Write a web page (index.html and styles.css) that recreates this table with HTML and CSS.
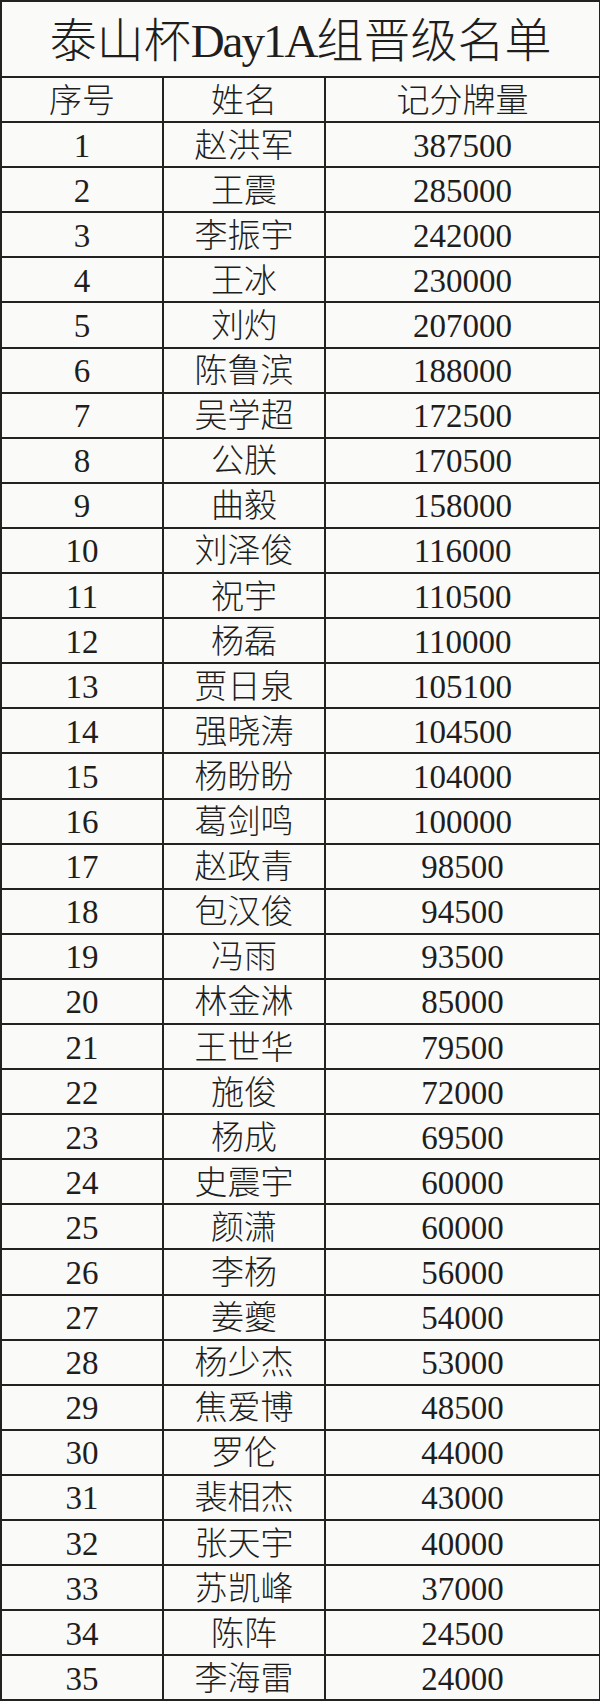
FILE: index.html
```html
<!DOCTYPE html>
<html lang="zh-CN">
<head>
<meta charset="utf-8">
<title>泰山杯Day1A组晋级名单</title>
<link rel="stylesheet" href="styles.css">
</head>
<body>
<table class="sheet">
  <colgroup>
    <col class="c-no">
    <col class="c-name">
    <col class="c-score">
  </colgroup>
  <thead>
    <tr class="title-row"><th colspan="3">泰山杯<span class="lat">Day1A</span>组晋级名单</th></tr>
    <tr class="head-row"><th>序号</th><th>姓名</th><th>记分牌量</th></tr>
  </thead>
  <tbody>
    <tr><td class="num">1</td><td>赵洪军</td><td class="num">387500</td></tr>
    <tr><td class="num">2</td><td>王震</td><td class="num">285000</td></tr>
    <tr><td class="num">3</td><td>李振宇</td><td class="num">242000</td></tr>
    <tr><td class="num">4</td><td>王冰</td><td class="num">230000</td></tr>
    <tr><td class="num">5</td><td>刘灼</td><td class="num">207000</td></tr>
    <tr><td class="num">6</td><td>陈鲁滨</td><td class="num">188000</td></tr>
    <tr><td class="num">7</td><td>吴学超</td><td class="num">172500</td></tr>
    <tr><td class="num">8</td><td>公朕</td><td class="num">170500</td></tr>
    <tr><td class="num">9</td><td>曲毅</td><td class="num">158000</td></tr>
    <tr><td class="num">10</td><td>刘泽俊</td><td class="num">116000</td></tr>
    <tr><td class="num">11</td><td>祝宇</td><td class="num">110500</td></tr>
    <tr><td class="num">12</td><td>杨磊</td><td class="num">110000</td></tr>
    <tr><td class="num">13</td><td>贾日泉</td><td class="num">105100</td></tr>
    <tr><td class="num">14</td><td>强晓涛</td><td class="num">104500</td></tr>
    <tr><td class="num">15</td><td>杨盼盼</td><td class="num">104000</td></tr>
    <tr><td class="num">16</td><td>葛剑鸣</td><td class="num">100000</td></tr>
    <tr><td class="num">17</td><td>赵政青</td><td class="num">98500</td></tr>
    <tr><td class="num">18</td><td>包汉俊</td><td class="num">94500</td></tr>
    <tr><td class="num">19</td><td>冯雨</td><td class="num">93500</td></tr>
    <tr><td class="num">20</td><td>林金淋</td><td class="num">85000</td></tr>
    <tr><td class="num">21</td><td>王世华</td><td class="num">79500</td></tr>
    <tr><td class="num">22</td><td>施俊</td><td class="num">72000</td></tr>
    <tr><td class="num">23</td><td>杨成</td><td class="num">69500</td></tr>
    <tr><td class="num">24</td><td>史震宇</td><td class="num">60000</td></tr>
    <tr><td class="num">25</td><td>颜潇</td><td class="num">60000</td></tr>
    <tr><td class="num">26</td><td>李杨</td><td class="num">56000</td></tr>
    <tr><td class="num">27</td><td>姜夔</td><td class="num">54000</td></tr>
    <tr><td class="num">28</td><td>杨少杰</td><td class="num">53000</td></tr>
    <tr><td class="num">29</td><td>焦爱博</td><td class="num">48500</td></tr>
    <tr><td class="num">30</td><td>罗伦</td><td class="num">44000</td></tr>
    <tr><td class="num">31</td><td>裴相杰</td><td class="num">43000</td></tr>
    <tr><td class="num">32</td><td>张天宇</td><td class="num">40000</td></tr>
    <tr><td class="num">33</td><td>苏凯峰</td><td class="num">37000</td></tr>
    <tr><td class="num">34</td><td>陈阵</td><td class="num">24500</td></tr>
    <tr><td class="num">35</td><td>李海雷</td><td class="num">24000</td></tr>
  </tbody>
</table>
</body>
</html>
```

FILE: styles.css
```css
html, body {
  margin: 0;
  padding: 0;
  background: #fafaf8;
}

.sheet {
  width: 599px;
  table-layout: fixed;
  border-collapse: collapse;
  color: #1e1e1e;
  font-family: "Liberation Serif", "Noto Sans CJK SC", serif;
  font-weight: 300;
}

.c-no { width: 162px; }
.c-name { width: 162px; }
.c-score { width: 275px; }

.sheet tr {
  height: 45.1px;
}

.sheet .title-row {
  height: 76px;
}

.sheet th,
.sheet td {
  border: 2px solid #222;
  padding: 2px 0 0;
  text-align: center;
  vertical-align: middle;
  font-weight: 300;
  font-size: 33px;
  line-height: 36px;
  white-space: nowrap;
  overflow: hidden;
}

.title-row th {
  font-size: 47px;
  line-height: 50px;
  padding-top: 4px;
}

.lat {
  font-family: "Liberation Serif", serif;
  letter-spacing: -2px;
}

.num {
  font-size: 34px;
}
```
